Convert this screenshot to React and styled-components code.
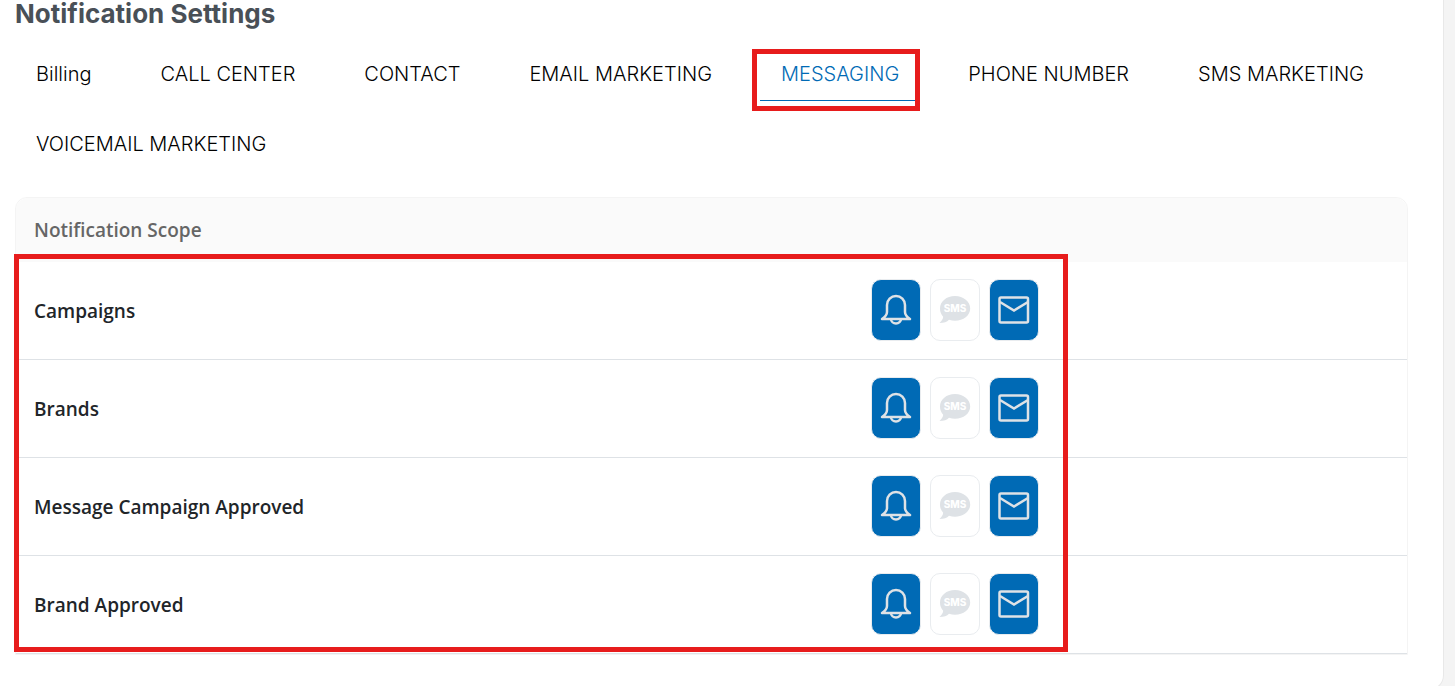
import React, { useState } from "react";
import styled, { createGlobalStyle } from "styled-components";

const GlobalStyle = createGlobalStyle`
    * {
        box-sizing: border-box;
    }

    body {
        margin: 0;
        background: #f4f4f4;
        overflow: hidden;
    }
`;

const Panel = styled.main`
    margin-right: 11px;
    padding: 0 35px 35px 15px;
    background: #fff;
    border-right: 1px solid #e8e8e8;
    border-bottom: 1px solid #e8e8e8;
    border-bottom-right-radius: 16px;
`;

const Title = styled.h1`
    margin: 0;
    color: #495057;
    font: 700 26px/28px Inter, sans-serif;
`;

const TabList = styled.nav`
    display: flex;
    flex-wrap: wrap;
    gap: 16px 27px;
    margin-top: 19px;
`;

const Tab = styled.button`
    position: relative;
    height: 54px;
    padding: 0 21px;
    border: 0;
    border-bottom: 1px solid ${(props) => (props.$active ? "#006ab5" : "transparent")};
    background: none;
    color: ${(props) => (props.$active ? "#006ab5" : "#000")};
    font: 300 20px/30px Inter, sans-serif;
    white-space: nowrap;
    cursor: pointer;
`;

const TabMark = styled.span`
    position: absolute;
    inset: 2px 0 -11px -8px;
    border: 5px solid #e71c1c;
    pointer-events: none;
`;

const ScopeCard = styled.section`
    position: relative;
    margin-top: 26px;
    border: 1px solid #f4f4f4;
    border-radius: 12px 12px 0 0;
`;

const RowsMark = styled.div`
    position: absolute;
    top: 56px;
    bottom: 2px;
    left: -2px;
    width: calc(76% - 3px);
    border: 5px solid #e71c1c;
    pointer-events: none;
`;

const ScopeTable = styled.table`
    width: 100%;
    table-layout: fixed;
    border-collapse: separate;
    border-spacing: 0;
    font: 500 19px/28px "Open Sans", sans-serif;
`;

const HeadCell = styled.th`
    width: ${(props) => props.$width};
    height: 64px;
    padding: 0 18px;
    background: #fafafa;
    color: #666;
    font-weight: 600;
    text-align: left;

    &:first-child {
        border-top-left-radius: 12px;
    }

    &:last-child {
        border-top-right-radius: 12px;
    }
`;

const Cell = styled.td`
    height: 98px;
    padding: 0 18px;
    border-bottom: 1px solid #dee2e6;
    color: #212529;
    font-weight: 600;
`;

const ActionsCell = styled(Cell)`
    padding: 0 20px 2px;
`;

const Actions = styled.div`
    display: flex;
    gap: 9px;
`;

const ActionButton = styled.button`
    display: flex;
    align-items: center;
    justify-content: center;
    width: 50px;
    height: 62px;
    padding: 0;
    border: 1px solid #e9ecef;
    border-radius: 10px;
    background: ${(props) => (props.$on ? "#006ab5" : "#fff")};
    color: #dee2e6;
    cursor: pointer;
`;

const BellIcon = () => (
    <svg width="32" height="32" viewBox="0 0 32 32" fill="none" stroke="currentColor" strokeWidth="2.5">
        <path d="M7 18v-7a9 9 0 0 1 18 0v7c0 3 2 5 5 7H2C5 23 7 21 7 18z" strokeLinejoin="round" />
        <path d="M11 25a5 4.500 0 0 0 10 0" />
    </svg>
);

const SmsIcon = () => (
    <svg width="32" height="32" viewBox="0 0 32 32">
        <path d="M16 2C7.500 2 1 7.500 1 14.500c0 3.500 1.200 6 3.200 8.200C4 25 2.500 27 .5 29c4.500 0 7.500-1 9.500-3.200 2 .600 4 .900 6 .900 8.500 0 15.200-5.500 15.200-12.300S24.500 2 16 2z" fill="currentColor" />
        <text x="16" y="18" fill="#fff" fontFamily="Inter, sans-serif" fontSize="10" fontWeight="800" textAnchor="middle">SMS</text>
    </svg>
);

const MailIcon = () => (
    <svg width="32" height="32" viewBox="0 0 32 32" fill="none" stroke="currentColor" strokeWidth="2.5">
        <rect x="1.5" y="3.5" width="28.5" height="25" rx="1.5" />
        <path d="M2 8l14 8.500L30 8" />
    </svg>
);

const tabs = [
    "Billing",
    "CALL CENTER",
    "CONTACT",
    "EMAIL MARKETING",
    "MESSAGING",
    "PHONE NUMBER",
    "SMS MARKETING",
    "VOICEMAIL MARKETING",
];

const scopes = ["Campaigns", "Brands", "Message Campaign Approved", "Brand Approved"];

const ScopeRow = ({ name }) => {
    const [on, setOn] = useState({ bell: true, sms: false, mail: true });
    const toggle = (key) => setOn({ ...on, [key]: !on[key] });

    return (
        <tr>
            <Cell>{name}</Cell>
            <ActionsCell>
                <Actions>
                    <ActionButton $on={on.bell} aria-pressed={on.bell} aria-label="Push" onClick={() => toggle("bell")}>
                        <BellIcon />
                    </ActionButton>
                    <ActionButton $on={on.sms} aria-pressed={on.sms} aria-label="SMS" onClick={() => toggle("sms")}>
                        <SmsIcon />
                    </ActionButton>
                    <ActionButton $on={on.mail} aria-pressed={on.mail} aria-label="Email" onClick={() => toggle("mail")}>
                        <MailIcon />
                    </ActionButton>
                </Actions>
            </ActionsCell>
            <Cell />
        </tr>
    );
};

const App = () => {
    const [active, setActive] = useState("MESSAGING");

    return (
        <>
            <GlobalStyle />
            <Panel>
                <Title>Notification Settings</Title>
                <TabList>
                    {tabs.map((tab) => (
                        <Tab key={tab} $active={tab === active} onClick={() => setActive(tab)}>
                            {tab}
                            {tab === "MESSAGING" && <TabMark />}
                        </Tab>
                    ))}
                </TabList>
                <ScopeCard>
                    <ScopeTable>
                        <thead>
                            <tr>
                                <HeadCell $width="60%">Notification Scope</HeadCell>
                                <HeadCell $width="16%" />
                                <HeadCell $width="24%" />
                            </tr>
                        </thead>
                        <tbody>
                            {scopes.map((name) => (
                                <ScopeRow key={name} name={name} />
                            ))}
                        </tbody>
                    </ScopeTable>
                    <RowsMark />
                </ScopeCard>
            </Panel>
        </>
    );
};

export default App;
